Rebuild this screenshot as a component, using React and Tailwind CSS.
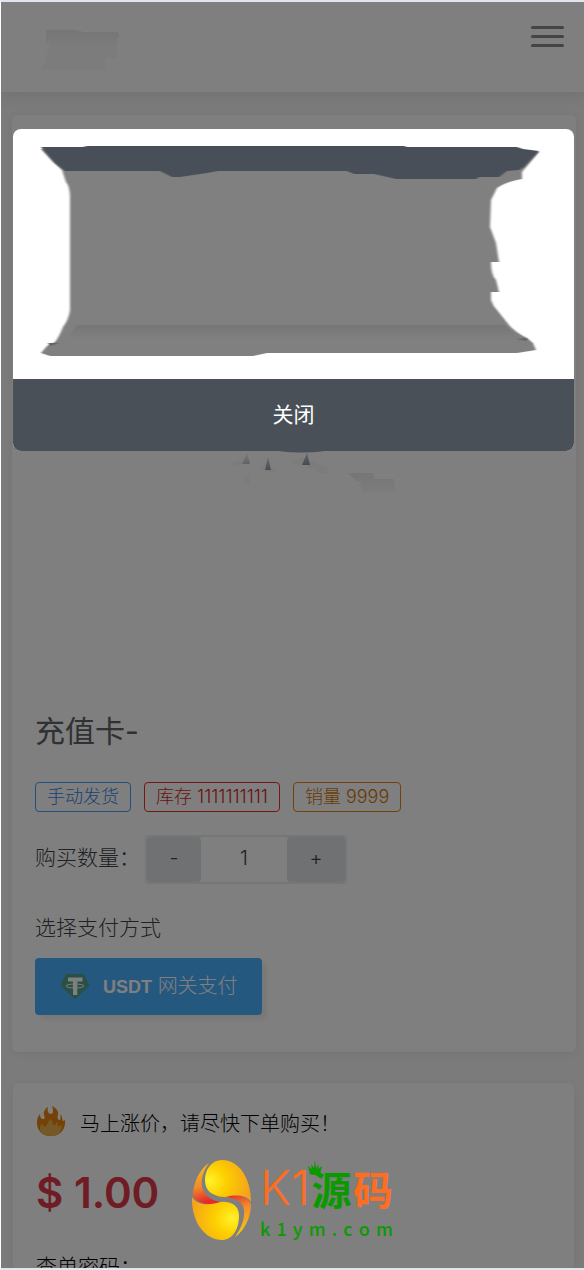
import React, { useState } from 'react';

const tags = [
    { text: '手动发货', style: 'border-[#409eff] text-[#3584ea]' },
    { text: '库存 1111111111', style: 'border-[#e8302a] text-[#d01f1a]' },
    { text: '销量 9999', style: 'border-[#e6860a] text-[#d07400]' }
];

const HeaderLogo = () => (
    <svg className="w-20 h-11" viewBox="0 0 80 44" aria-hidden="true">
        <defs>
            <linearGradient id="brand" x1="0" y1="0" x2="0" y2="1">
                <stop offset="0" stopColor="#ececec" />
                <stop offset="0.4" stopColor="#f8f8f8" />
                <stop offset="1" stopColor="#f8f8f8" />
            </linearGradient>
        </defs>
        <path d="M4 4H34L42 6H76L78 12H75V32H63L65 44H0L8 17H4Z" fill="url(#brand)" />
    </svg>
);

const ProductImage = () => (
    <svg className="w-full h-[596px]" viewBox="0 0 564 596" preserveAspectRatio="xMidYMin meet" aria-hidden="true">
        <defs>
            <linearGradient id="peak" x1="0" y1="0" x2="0.6" y2="1">
                <stop offset="0" stopColor="#ffffff" />
                <stop offset="1" stopColor="#8490a0" />
            </linearGradient>
            <linearGradient id="mist" x1="0" y1="0" x2="0" y2="1">
                <stop offset="0" stopColor="#ececec" />
                <stop offset="1" stopColor="#fafafa" />
            </linearGradient>
        </defs>
        <path d="M219 348L230 344V351Q223 352 219 348ZM246 352L254 348L265 355L258 358ZM279 348L290 342L300 346L317 353V358H307L292 350ZM230 362L238 359V370L230 368Z" fill="#f9f9f9" />
        <path d="M266 336H313Q290 339 266 336Z" fill="#94a0b0" />
        <path d="M235 337L238 349H230ZM256 342L259 355H253ZM295 338L298 350H290Z" fill="url(#peak)" />
        <path d="M336 358H361L363 366H344ZM352 364H382L384 378H352L347 370Z" fill="url(#mist)" />
    </svg>
);

const NoticeImage = () => (
    <svg className="block w-full h-[250px]" viewBox="0 0 561 250" preserveAspectRatio="none" aria-hidden="true">
        <defs>
            <linearGradient id="fold" x1="0" y1="0" x2="0" y2="1">
                <stop offset="0" stopColor="#767676" />
                <stop offset="1" stopColor="#808080" />
            </linearGradient>
            <filter id="soft" x="-5%" y="-5%" width="110%" height="110%">
                <feGaussianBlur stdDeviation="1.2 0" />
            </filter>
        </defs>
        <path
            d="M28 20L40 33L49 41L53 53Q57 58 57 68V181Q56 190 50 198Q46 208 42 213L34 217L28 224L37 227H240L254 224H504L523 221L520 214L514 209Q502 203 496 196L484 181Q480 177 478 171V163H486L483 151Q478 146 478 133H486L483 114L477 98L478 71L484 59Q492 53 509 50V43L526 23Z"
            fill="#808080"
            filter="url(#soft)"
        />
        <path d="M64 196H492L506 210H54Z" fill="url(#fold)" />
        <path
            d="M28 18H70L74 17H391L394 18H504L510 20L526 22L511 38L506 41L494 42L486 48H466L463 50H383L361 45H341L334 42H205L194 44L167 48H159L147 42H52L42 34Z"
            fill="#4a5058"
            filter="url(#soft)"
        />
        <path d="M35 214H46L37 217ZM503 210L514 209V212Z" fill="#5d636a" filter="url(#soft)" />
    </svg>
);

const TetherIcon = () => (
    <svg className="w-[30px] h-[27px]" viewBox="0 0 30 27" aria-hidden="true">
        <path d="M6 1H24L29.500 12.500L15 26.500L0.500 12.500Z" fill="#50a08a" />
        <path d="M8 4.500H22.500V8.500H17.300V22H13V8.500H8Z" fill="#fff" />
        <ellipse cx="15" cy="13" rx="9" ry="2" fill="none" stroke="#fff" strokeWidth="1" />
    </svg>
);

const FlameIcon = () => (
    <svg className="w-[30px] h-[30px]" viewBox="0 0 30 30" aria-hidden="true">
        <path d="M15 30C6 30 1 24 1 17C1 13 2 10 4 8C4 11 5 13 7 13C9 13 9 11 8 9C7 5 10 2 12 1C11 5 12 8 15 8C18 8 17 3 16 0C20 2 23 5 22 9C21 12 22 14 23 14C25 14 25 11 24 8C27 10 26 15 27 15C28 15 29 14 29 13C30 23 25 30 15 30Z" fill="#e8820c" />
        <path d="M15 30C8 30 4 27 4 23C4 20 5 18 6 18C7 20 9 21 10 20C12 18 12 15 15 13C16 15 16 17 18 19C19 20 20 19 20 16C22 17 22 20 23 21C24 21 24 20 25 18C28 25 22 30 15 30Z" fill="#e8b04a" />
    </svg>
);

const Watermark = () => (
    <div className="absolute left-[191px] top-[1158px] flex gap-2 pointer-events-none">
        <svg className="w-15 h-20" viewBox="0 0 60 80" aria-hidden="true">
            <defs>
                <radialGradient id="sunTop" cx="0.1" cy="0.5" r="0.9">
                    <stop offset="0" stopColor="#fff22a" />
                    <stop offset="0.4" stopColor="#fdd000" />
                    <stop offset="1" stopColor="#f5a11c" />
                </radialGradient>
                <radialGradient id="sunBottom" cx="0.85" cy="0.5" r="0.9">
                    <stop offset="0" stopColor="#fff22a" />
                    <stop offset="0.4" stopColor="#fdd000" />
                    <stop offset="1" stopColor="#f5a11c" />
                </radialGradient>
                <linearGradient id="swooshLeft" x1="0" y1="0" x2="0.2" y2="1">
                    <stop offset="0" stopColor="#f9c713" />
                    <stop offset="0.6" stopColor="#f28a2b" />
                    <stop offset="1" stopColor="#e62a28" />
                </linearGradient>
                <linearGradient id="swooshRight" x1="0" y1="0" x2="0.2" y2="1">
                    <stop offset="0" stopColor="#e62a28" />
                    <stop offset="0.4" stopColor="#f28a2b" />
                    <stop offset="1" stopColor="#f9c713" />
                </linearGradient>
            </defs>
            <path d="M30 0C47 0 59 18 59 42C56 37 50 35 44 36C40 37 37 38 32 37C19 36 13 30 13 20C13 9 20 0 30 0Z" fill="url(#sunTop)" />
            <path d="M0 37C4 43 11 45 18 44C24 43 29 41 34 42C43 43 47 48 47 56C47 70 40 80 30 80C12 80-1 60 0 37Z" fill="url(#sunBottom)" />
            <path d="M17 3C9 14 8 24 12 32C16 38 22 41 28 42C17 46 6 44 1 36C1 22 8 9 17 3Z" fill="url(#swooshLeft)" />
            <path d="M33 37C43 34 55 35 59 44C59 58 52 71 43 77C51 66 54 54 51 46C48 40 41 38 33 37Z" fill="url(#swooshRight)" />
        </svg>
        <div className="w-[133px] font-['Noto_Sans_CJK_SC',sans-serif]">
            <div className="flex h-14 items-center justify-between leading-none">
                <span className="text-[48px] font-[Inter] font-light text-[#ff6d20]">K1</span>
                <span className="relative text-[40px] font-bold text-[#0a9a00]">
                    源
                    <svg className="absolute -left-1 -top-2 w-4 h-4" viewBox="0 0 16 16" aria-hidden="true">
                        <path d="M1 6L5 9L4 4L7 8L8 0L9 8L12 4L11 9L15 6L13 14Q8 16 3 14Z" fill="#0a9a00" />
                    </svg>
                </span>
                <span className="text-[40px] font-bold text-[#ff6d20]">码</span>
            </div>
            <div className="flex justify-between text-lg leading-6 font-medium text-[#0a9a00]">
                {[...'k1ym.com'].map((letter, i) => (
                    <span key={i}>{letter}</span>
                ))}
            </div>
        </div>
    </div>
);

const App = () => {
    const [open, setOpen] = useState(true);
    const [count, setCount] = useState('1');

    const step = (n) => setCount(prev => String(Math.max(1, Number(prev) + n)));

    return (
        <div className="relative h-screen overflow-hidden border-y-2 border-l border-y-[#e1e6ee] border-l-white bg-[#f6f6f6] font-[Inter,'Noto_Sans_CJK_SC',sans-serif] font-light text-[#404245]">
            <header className="flex h-[90px] items-start justify-between bg-white pl-[41px] pr-5 pt-6 shadow-[0_2px_16px_rgba(0,0,0,0.1)]">
                <HeaderLogo />
                <button type="button" aria-label="菜单" className="flex flex-col gap-[6px]">
                    <span className="h-[3px] w-[33px] rounded-sm bg-[#888]" />
                    <span className="h-[3px] w-[33px] rounded-sm bg-[#888]" />
                    <span className="h-[3px] w-[33px] rounded-sm bg-[#888]" />
                </button>
            </header>

            <main className="pl-[11px] pr-2 pt-[23px]">
                <section className="rounded-md bg-white pb-[37px] shadow-[0_2px_8px_rgba(0,0,0,0.06)]">
                    <ProductImage />
                    <div className="px-[23px]">
                        <h1 className="text-[30px] leading-10 font-normal text-[#606266]">充值卡-</h1>

                        <div className="mt-[31px] flex gap-[13px]">
                            {tags.map(tag => (
                                <span key={tag.text} className={`h-[30px] rounded-sm border px-[11px] text-lg leading-7 ${tag.style}`}>
                                    {tag.text}
                                </span>
                            ))}
                        </div>

                        <div className="mt-[23px] flex items-center">
                            <label htmlFor="count" className="w-[110px] pb-1 text-[21px] leading-[30px]">购买数量：</label>
                            <div className="flex h-[49px] w-[202px] rounded-sm border-2 border-[#ebecee] text-xl">
                                <button type="button" onClick={() => step(-1)} className="w-[54px] rounded-sm bg-[#dfe2e7] pb-1">-</button>
                                <input
                                    id="count"
                                    value={count}
                                    onChange={e => setCount(e.target.value)}
                                    className="w-0 flex-1 bg-white pb-1 text-center"
                                />
                                <button type="button" onClick={() => step(1)} className="w-[58px] rounded-sm bg-[#dfe2e7] pb-1">+</button>
                            </div>
                        </div>

                        <p className="mt-[29px] text-[21px] leading-[30px]">选择支付方式</p>
                        <button type="button" className="mt-[15px] flex h-[57px] w-[227px] items-center rounded-sm bg-[#4bb0fe] pl-[25px] text-xl text-white shadow-[5px_5px_4px_rgba(0,0,0,0.06)]">
                            <TetherIcon />
                            <span className="ml-[13px]">
                                <b className="text-lg font-bold font-['Liberation_Sans']">USDT</b> 网关支付
                            </span>
                        </button>
                    </div>
                </section>

                <section className="mt-[31px] mr-[2px] ml-px rounded-md bg-white px-[23px] pt-[23px] shadow-[0_2px_8px_rgba(0,0,0,0.06)]">
                    <div className="flex items-end gap-[14px] text-xl leading-6 text-black">
                        <FlameIcon />
                        <p>马上涨价，请尽快下单购买！</p>
                    </div>
                    <p className="mt-[33px] text-[42px] leading-[48px] font-semibold text-[#e03848]">$ 1.00</p>
                    <label htmlFor="password" className="mt-[35px] block text-[21px] leading-[30px] text-black">查单密码：</label>
                    <input id="password" type="password" className="h-12 w-full rounded-sm border border-[#dcdfe6]" />
                </section>
            </main>

            {open && (
                <div className="absolute inset-0 bg-black/50 pl-3 pr-[10px] pt-[127px]">
                    <div role="dialog" aria-modal="true" className="overflow-hidden rounded-lg bg-white">
                        <NoticeImage />
                        <button
                            type="button"
                            onClick={() => setOpen(false)}
                            className="h-[72px] w-full bg-[#4a5058] text-[21px] font-normal text-white"
                        >
                            关闭
                        </button>
                    </div>
                </div>
            )}

            <Watermark />
        </div>
    );
};

export default App;
